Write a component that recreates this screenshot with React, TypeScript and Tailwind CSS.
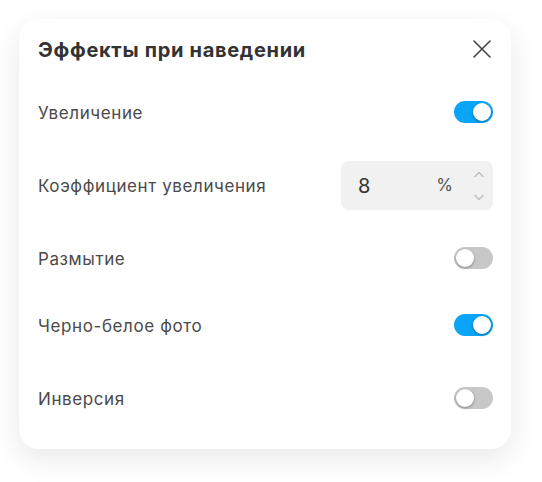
import React from "react";

function Toggle({ on }: { on: boolean }) {
  return (
    <div
      className={
        "relative w-[39px] h-[22px] rounded-full " +
        (on ? "bg-[#0aa5f7]" : "bg-[#c8c8c8]")
      }
    >
      <div
        className={
          "absolute top-[2px] w-[18px] h-[18px] rounded-full bg-white shadow-[0_1px_3px_rgba(0,0,0,0.35)] " +
          (on ? "left-[19px]" : "left-[2px]")
        }
      />
    </div>
  );
}

function Row({ label, children, className }: { label: string; children: React.ReactNode; className: string }) {
  return (
    <div className={"flex items-center justify-between " + className}>
      <span className="text-[17px] tracking-[0.6px] text-[#4a4a4a] pt-[3px]">{label}</span>
      {children}
    </div>
  );
}

export default function App() {
  return (
    <div
      className="w-[542px] h-[482px] bg-white pt-[19px] pl-[19px]"
      style={{ fontFamily: "Inter, 'Noto Sans', sans-serif" }}
    >
      <div className="w-[492px] h-[430px] rounded-[20px] bg-white shadow-[0_10px_30px_rgba(0,0,0,0.09)] pt-[16px] pl-[19px] pr-[18px]">
        <div className="flex items-center justify-between h-[28px]">
          <span className="text-[20px] font-bold tracking-[0.7px] text-[#333333] pt-[2px]">Эффекты при наведении</span>
          <svg width="20" height="20" viewBox="0 0 20 20" className="mr-[1px]">
            <path d="M2 2 L18 18 M18 2 L2 18" stroke="#444" strokeWidth="1.6" strokeLinecap="round" />
          </svg>
        </div>
        <Row label="Увеличение" className="h-[48px] mt-[25px]">
          <Toggle on />
        </Row>
        <Row label="Коэффициент увеличения" className="h-[49px] mt-[25px]">
          <div className="w-[152px] h-[49px] rounded-[8px] bg-[#f1f1f1] flex items-center pl-[17px] pr-[8px]">
            <span className="text-[20px] text-[#333] flex-1">8</span>
            <span className="text-[17px] text-[#555] mr-[20px]">%</span>
            <div className="flex flex-col items-center gap-[16px]">
              <svg width="12" height="7" viewBox="0 0 12 7">
                <path d="M1.5 6 L6 1.5 L10.5 6" stroke="#bdbdbd" strokeWidth="1.3" fill="none" />
              </svg>
              <svg width="12" height="7" viewBox="0 0 12 7">
                <path d="M1.5 1 L6 5.5 L10.5 1" stroke="#bdbdbd" strokeWidth="1.3" fill="none" />
              </svg>
            </div>
          </div>
        </Row>
        <Row label="Размытие" className="h-[48px] mt-[24px]">
          <Toggle on={false} />
        </Row>
        <Row label="Черно-белое фото" className="h-[48px] mt-[19px]">
          <Toggle on />
        </Row>
        <Row label="Инверсия" className="h-[48px] mt-[25px]">
          <Toggle on={false} />
        </Row>
      </div>
    </div>
  );
}
